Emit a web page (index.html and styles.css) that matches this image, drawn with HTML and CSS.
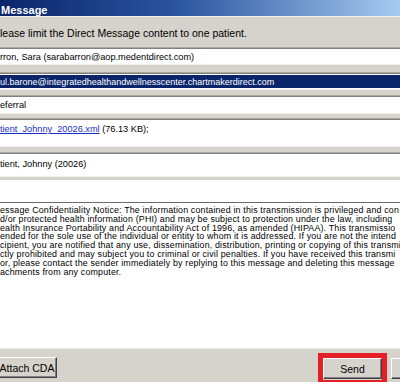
FILE: index.html
```html
<!DOCTYPE html>
<html lang="en">
<head>
    <meta charset="UTF-8">
    <meta name="viewport" content="width=device-width, initial-scale=1.0">
    <title>Message</title>
    <link rel="stylesheet" href="styles.css">
</head>
<body>
    <div class="dialog">
        <!-- title bar -->
        <div class="titlebar"><span class="title">Message</span></div>

        <div class="notice">lease limit the Direct Message content to one patient.</div>

        <!-- from / to / subject / attachments / patient -->
        <div class="field field-from">rron, Sara (sarabarron@aop.medentdirect.com)</div>
        <div class="field field-to"><span class="selected">ul.barone@integratedhealthandwellnesscenter.chartmakerdirect.com</span></div>
        <div class="field field-subject">eferral</div>
        <div class="field field-attach"><a href="#" class="file-link">tient_Johnny_20026.xml</a> (76.13 KB);</div>
        <div class="field field-patient">tient, Johnny (20026)</div>
        <div class="blank"></div>

        <!-- message body -->
        <div class="body-text">
            <div class="line">essage Confidentiality Notice: The information contained in this transmission is privileged and con</div>
            <div class="line">d/or protected health information (PHI) and may be subject to protection under the law, including</div>
            <div class="line">ealth Insurance Portability and Accountability Act of 1996, as amended (HIPAA). This transmissio</div>
            <div class="line">ended for the sole use of the individual or entity to whom it is addressed. If you are not the intend</div>
            <div class="line">cipient, you are notified that any use, dissemination, distribution, printing or copying of this transmi</div>
            <div class="line">ctly prohibited and may subject you to criminal or civil penalties. If you have received this transmi</div>
            <div class="line">or, please contact the sender immediately by replying to this message and deleting this message</div>
            <div class="line">achments from any computer.</div>
        </div>

        <!-- buttons -->
        <div class="footer">
            <button class="btn btn-attach">Attach CDA</button>
            <div class="spacer"></div>
            <div class="highlight"><button class="btn btn-send">Send</button></div>
            <button class="btn btn-cancel"></button>
        </div>
    </div>
</body>
</html>
```

FILE: styles.css
```css
html, body {
    margin: 0;
    padding: 0;
}
body {
    font-family: "Liberation Sans", Arial, sans-serif;
    background-color: #d4d0c8;
}
.dialog {
    width: 400px;
    height: 382px;
    overflow: hidden;
    background-color: #d6d3cc;
    display: flex;
    flex-direction: column;
}
.titlebar {
    height: 17px;
    flex: none;
    background: linear-gradient(to right, #0a246a 0%, #2c56a0 45%, #a6caf0 100%);
    display: flex;
    align-items: center;
    padding-top: 3px;
    border-bottom: 1px solid #f4f3ee;
    box-sizing: border-box;
}
.title {
    color: white;
    font-weight: bold;
    font-size: 11px;
    padding-left: 1px;
}
.notice {
    height: 31px;
    flex: none;
    display: flex;
    align-items: center;
    font-size: 10.5px;
    color: #000;
    padding-top: 1px;
    box-sizing: border-box;
}
.field {
    flex: none;
    background-color: white;
    border-top: 1px solid #808080;
    border-bottom: 1px solid #f0efea;
    box-shadow: 0 -1px 0 #aaa79f;
    font-size: 9.2px;
    color: #000;
    white-space: nowrap;
    overflow: hidden;
    display: flex;
    align-items: center;
    box-sizing: border-box;
}
.field-from {
    height: 17px;
}
.field-to {
    height: 17px;
    margin-top: 8px;
    padding: 1px 0;
    align-items: stretch;
    font-size: 9px;
}
.selected {
    flex: 1;
    background-color: #0a246a;
    color: white;
    display: flex;
    align-items: center;
}
.field-subject {
    height: 18px;
    margin-top: 6px;
}
.field-attach {
    display: block;
    height: 28px;
    margin-top: 5px;
    padding-top: 4px;
    line-height: 11px;
}
.file-link {
    color: #1a2fc0;
    text-decoration: underline;
}
.field-patient {
    height: 24px;
    margin-top: 6px;
    padding-bottom: 3px;
}
.blank {
    flex: none;
    height: 22px;
    margin-top: 3px;
    background-color: white;
}
.body-text {
    flex: none;
    height: 146px;
    background-color: white;
    border-top: 1px solid #6b6b6b;
    padding-top: 3px;
    box-sizing: border-box;
    font-size: 8.9px;
    letter-spacing: 0.16px;
    line-height: 8.8px;
    color: #000;
}
.line {
    white-space: nowrap;
}
.footer {
    flex: 1;
    display: flex;
    align-items: flex-start;
    padding-top: 4px;
    border-top: 1px solid #eeece6;
}
.spacer {
    flex: 1;
}
.btn {
    font-family: "Liberation Sans", Arial, sans-serif;
    font-size: 10.5px;
    color: #000;
    background-color: #d6d3cc;
    border-top: 1px solid #ffffff;
    border-left: 1px solid #ffffff;
    border-right: 1px solid #404040;
    border-bottom: 1px solid #404040;
    box-shadow: inset -1px -1px 0 #808080;
    padding: 0;
    height: 21px;
    margin: 4px 0 0 0;
}
.btn-attach {
    width: 60px;
    margin-left: -3px;
}
.highlight {
    border: 5px solid #e41f26;
    height: 32px;
    box-sizing: border-box;
    display: flex;
}
.highlight .btn-send {
    width: 59px;
    height: 21px;
    margin: 0;
}
.btn-cancel {
    width: 60px;
    margin-left: 4px;
    margin-right: -51px;
    margin-top: 5px;
}
```
